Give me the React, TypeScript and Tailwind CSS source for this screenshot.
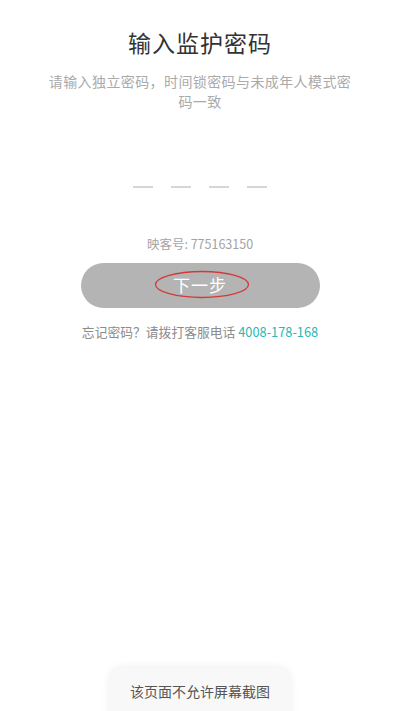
import React from "react";

const font = { fontFamily: '"Noto Sans CJK SC", "Noto Sans", sans-serif' };

export default function App() {
  return (
    <div className="relative w-[400px] h-[711px] bg-white overflow-hidden" style={font}>
      <div className="flex flex-col items-center">
        <h1 className="mt-[25px] text-[23px] leading-[34px] text-[#333333] tracking-[1px] font-normal">输入监护密码</h1>
        <p className="mt-[12px] w-[310px] text-center text-[14px] leading-[20px] text-[#aaaaaa] tracking-[0.4px]">
          请输入独立密码，时间锁密码与未成年人模式密码一致
        </p>
        <div className="mt-[75px] flex gap-[18px]">
          <div className="w-[20px] h-[1.5px] bg-[#d6d6d6]" />
          <div className="w-[20px] h-[1.5px] bg-[#d6d6d6]" />
          <div className="w-[20px] h-[1.5px] bg-[#d6d6d6]" />
          <div className="w-[20px] h-[1.5px] bg-[#d6d6d6]" />
        </div>
        <div className="mt-[47px] text-[12.5px] leading-[18px] text-[#a3a3a3]">映客号: 775163150</div>
        <div className="relative mt-[10px] w-[239px] h-[45px] rounded-full bg-[#b4b4b4] flex items-center justify-center">
          <span className="text-[17px] text-white tracking-[1px]">下一步</span>
          <svg className="absolute left-[73px] top-[7px]" width="96" height="29" viewBox="0 0 96 29">
            <ellipse cx="48" cy="14.5" rx="46.5" ry="13" fill="none" stroke="#d23a3a" strokeWidth="1.3" />
          </svg>
        </div>
        <div className="mt-[15px] text-[12.8px] leading-[18px] text-[#8c8c8c]">
          忘记密码？请拨打客服电话 <span className="text-[#2bb8b6]">4008-178-168</span>
        </div>
      </div>
      <div className="absolute left-[110px] top-[668px] w-[180px] h-[60px] rounded-[12px] bg-[#f8f8f8] shadow-[0_0_10px_rgba(0,0,0,0.08)] flex justify-center">
        <span className="mt-[13px] text-[14px] leading-[20px] text-[#555555]">该页面不允许屏幕截图</span>
      </div>
    </div>
  );
}
